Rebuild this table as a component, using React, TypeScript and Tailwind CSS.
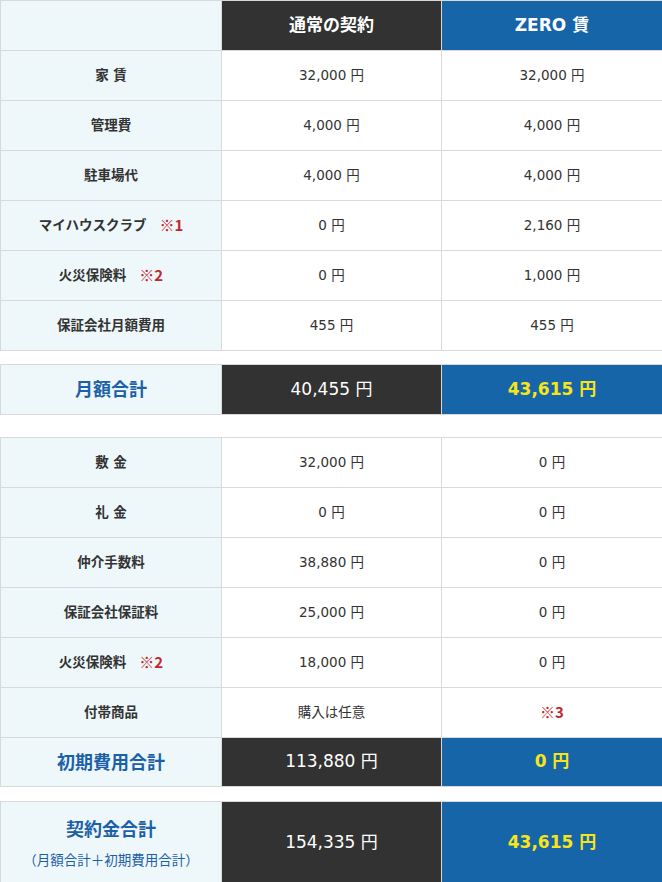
const font = "font-['DejaVu_Sans','Noto_Sans_CJK_JP',sans-serif]";

type Row = { label: string; note?: string; normal: string; zero: string; zeroNote?: boolean };

const monthly: Row[] = [
  { label: "家 賃", normal: "32,000 円", zero: "32,000 円" },
  { label: "管理費", normal: "4,000 円", zero: "4,000 円" },
  { label: "駐車場代", normal: "4,000 円", zero: "4,000 円" },
  { label: "マイハウスクラブ", note: "※1", normal: "0 円", zero: "2,160 円" },
  { label: "火災保険料", note: "※2", normal: "0 円", zero: "1,000 円" },
  { label: "保証会社月額費用", normal: "455 円", zero: "455 円" },
];

const initial: Row[] = [
  { label: "敷 金", normal: "32,000 円", zero: "0 円" },
  { label: "礼 金", normal: "0 円", zero: "0 円" },
  { label: "仲介手数料", normal: "38,880 円", zero: "0 円" },
  { label: "保証会社保証料", normal: "25,000 円", zero: "0 円" },
  { label: "火災保険料", note: "※2", normal: "18,000 円", zero: "0 円" },
  { label: "付帯商品", normal: "購入は任意", zero: "※3", zeroNote: true },
];

const cell = "border-r border-b border-[#d9d9d9] flex items-center justify-center";
const jp = "font-['Noto_Sans_CJK_JP',sans-serif]";

function PlainRow({ row }: { row: Row }) {
  return (
    <>
      <div className={`${cell} h-[50px] bg-[#eef7fa] text-[13.5px] font-bold text-[#333]`}>
        {row.label}
        {row.note && <span className={`ml-[13px] text-[15px] text-[#c1272d] ${jp}`}>{row.note}</span>}
      </div>
      <div className={`${cell} h-[50px] bg-white text-[13.5px] text-[#333]`}>{row.normal}</div>
      <div
        className={`${cell} h-[50px] bg-white ${
          row.zeroNote ? `text-[15px] font-bold text-[#c1272d] ${jp}` : "text-[13.5px] text-[#333]"
        }`}
      >
        {row.zero}
      </div>
    </>
  );
}

function TotalRow({ label, sub, normal, zero, h }: { label: string; sub?: string; normal: string; zero: string; h: string }) {
  return (
    <>
      <div className={`${cell} ${h} flex-col bg-[#eef7fa] text-[#1c61a8]`}>
        <span className="text-[18px] font-bold">{label}</span>
        {sub && <span className={`mt-[6px] text-[13.5px] ${jp}`}>{sub}</span>}
      </div>
      <div className={`${cell} ${h} bg-[#323232] border-[#5a5a5a] text-[17px] text-white`}>{normal}</div>
      <div className={`${cell} ${h} bg-[#1565a8] border-[#b8c8d8] text-[17px] font-bold text-[#f7e51a]`}>{zero}</div>
    </>
  );
}

const grid = "grid grid-cols-[221px_220px_221px] border-t border-l border-[#d9d9d9]";

export default function App() {
  return (
    <div className={`w-[662px] h-[882px] overflow-hidden bg-white ${font}`}>
      <div className={grid}>
        <div className={`${cell} h-[50px] bg-[#eef7fa]`} />
        <div className={`${cell} h-[50px] bg-[#323232] text-[17px] font-bold text-white`}>通常の契約</div>
        <div className={`${cell} h-[50px] bg-[#1565a8] text-[17px] font-bold text-white`}>ZERO 賃</div>
        {monthly.map((r) => (
          <PlainRow key={r.label} row={r} />
        ))}
      </div>

      <div className={`${grid} mt-[13px]`}>
        <TotalRow label="月額合計" normal="40,455 円" zero="43,615 円" h="h-[50px]" />
      </div>

      <div className={`${grid} mt-[22px]`}>
        {initial.map((r) => (
          <PlainRow key={r.label + r.normal} row={r} />
        ))}
        <TotalRow label="初期費用合計" normal="113,880 円" zero="0 円" h="h-[49px]" />
      </div>

      <div className={`${grid} mt-[14px]`}>
        <TotalRow
          label="契約金合計"
          sub="（月額合計＋初期費用合計）"
          normal="154,335 円"
          zero="43,615 円"
          h="h-[82px]"
        />
      </div>
    </div>
  );
}
